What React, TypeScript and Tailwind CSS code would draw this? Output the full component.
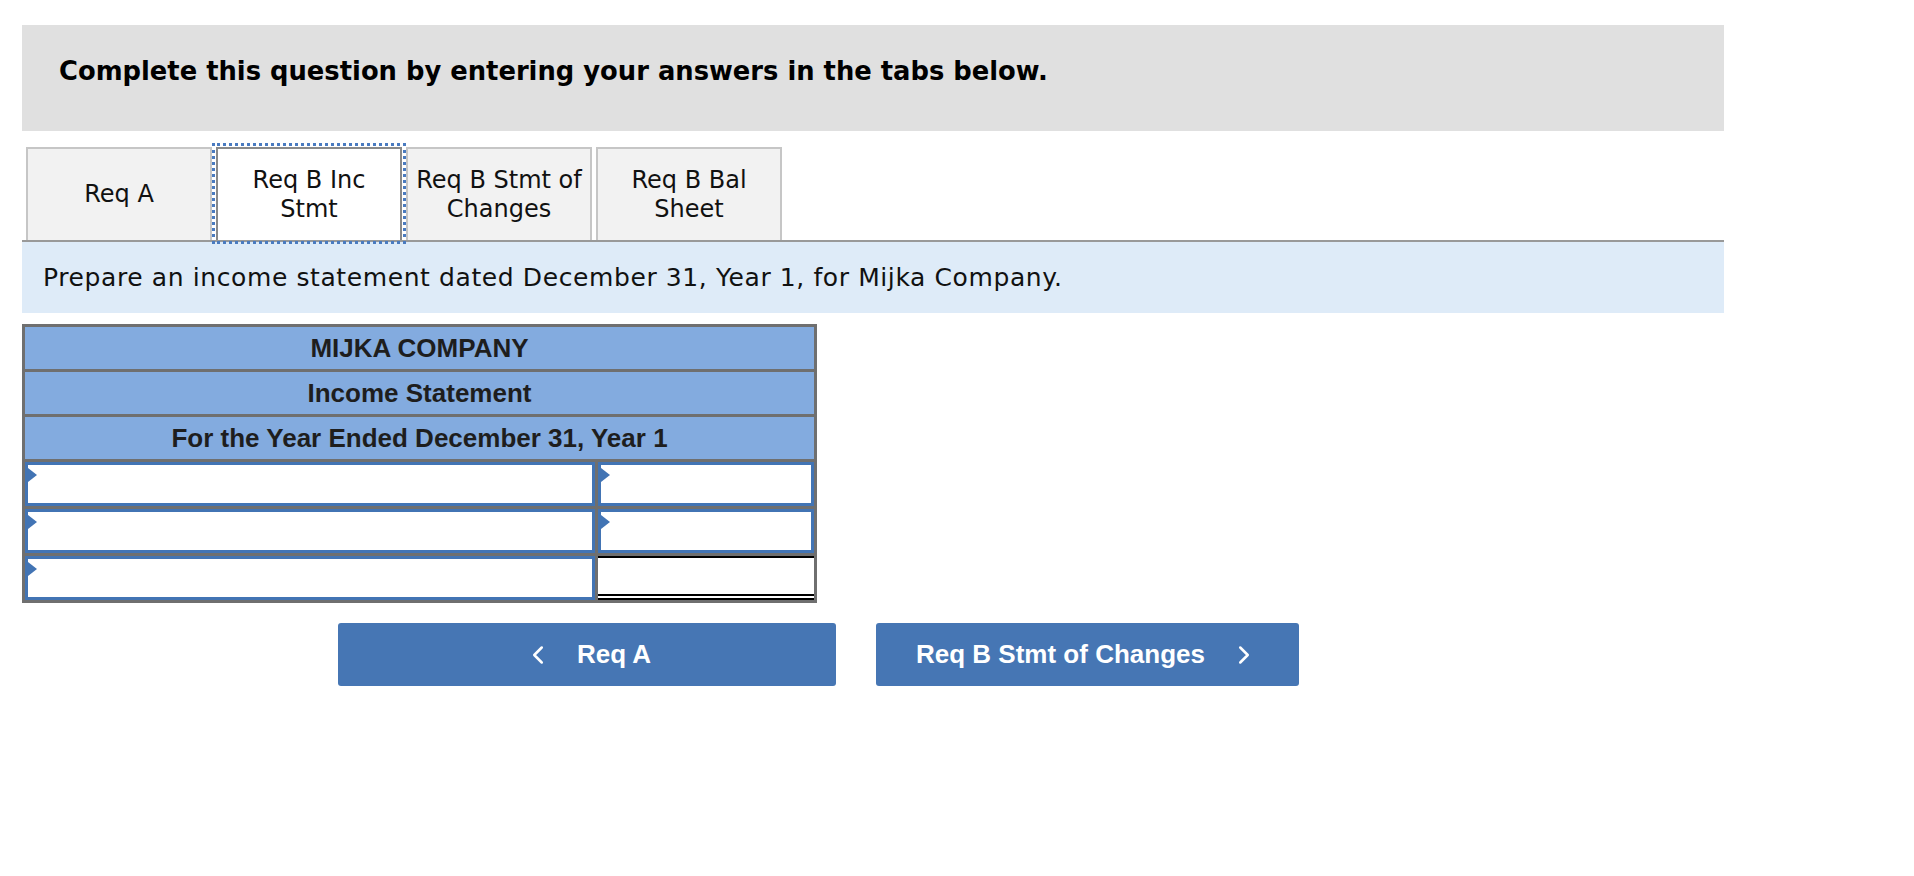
import { ChevronLeft, ChevronRight } from 'lucide-react';

const tabs = [
  { lines: ['Req A'], active: false },
  { lines: ['Req B Inc', 'Stmt'], active: true },
  { lines: ['Req B Stmt of', 'Changes'], active: false },
  { lines: ['Req B Bal', 'Sheet'], active: false },
];

const verdana = { fontFamily: '"DejaVu Sans", Verdana, sans-serif' };

function Marker() {
  return (
    <span className="absolute left-0 top-[3px] h-0 w-0 border-y-[7px] border-l-[9px] border-y-transparent border-l-[#4274b4]" />
  );
}

function InputBox() {
  return (
    <div className="relative h-full border-[3px] border-[#4274b4] bg-white">
      <Marker />
    </div>
  );
}

export default function App() {
  return (
    <div className="min-h-screen bg-white px-[22px] pt-[25px]">
      <div className="w-[1702px]">
        <div className="h-[106px] bg-[#e0e0e0] pl-[37px] pt-[31px]">
          <h1 className="text-[25.8px] font-bold leading-[30px] text-black" style={verdana}>
            Complete this question by entering your answers in the tabs below.
          </h1>
        </div>

        <div className="mt-[16px] flex h-[95px] gap-[4px] border-b-2 border-[#999999] pl-[4px]" style={verdana}>
          {tabs.map((t) => (
            <div
              key={t.lines.join(' ')}
              className={
                t.active
                  ? 'flex w-[186px] flex-col items-center justify-center border-2 border-b-0 border-[#8a8a8a] bg-white text-[24px] leading-[29px] text-[#111] outline-[3px] outline-offset-[1px] outline-[#4a7bc0] outline-dotted'
                  : 'flex w-[186px] flex-col items-center justify-center border-2 border-b-0 border-[#c6c6c6] bg-[#f2f2f2] text-[24px] leading-[29px] text-[#111]'
              }
            >
              {t.lines.map((l) => (
                <span key={l}>{l}</span>
              ))}
            </div>
          ))}
        </div>

        <div className="flex h-[71px] items-center bg-[#deebf8] pl-[21px]">
          <p className="text-[25px] tracking-[0.6px] text-[#111]" style={verdana}>
            Prepare an income statement dated December 31, Year 1, for Mijka Company.
          </p>
        </div>

        <div
          className="mt-[11px] w-[795px] border-[3px] border-[#6f6f6f] bg-[#6f6f6f]"
          style={{ fontFamily: '"Liberation Sans", Arial, sans-serif' }}
        >
          {['MIJKA COMPANY', 'Income Statement', 'For the Year Ended December 31, Year 1'].map((h) => (
            <div
              key={h}
              className="mb-[3px] flex h-[42px] items-center justify-center bg-[#83abdf] text-[26px] font-bold text-[#1e1e1e]"
            >
              {h}
            </div>
          ))}
          <div className="mb-[3px] grid h-[44px] grid-cols-[570px_1fr] gap-[3px]">
            <InputBox />
            <InputBox />
          </div>
          <div className="mb-[3px] grid h-[44px] grid-cols-[570px_1fr] gap-[3px]">
            <InputBox />
            <InputBox />
          </div>
          <div className="grid h-[44px] grid-cols-[570px_1fr] gap-[3px]">
            <InputBox />
            <div className="h-full border-t-2 border-b-[6px] border-t-black border-b-black border-double bg-white" />
          </div>
        </div>

        <div
          className="ml-[316px] mt-[20px] flex gap-[40px]"
          style={{ fontFamily: '"Liberation Sans", Arial, sans-serif' }}
        >
          <button className="flex h-[63px] w-[498px] items-center justify-center gap-[24px] rounded-[3px] bg-[#4676b4] text-[26px] font-bold text-white">
            <ChevronLeft size={30} strokeWidth={2} />
            <span>Req A</span>
          </button>
          <button className="flex h-[63px] w-[423px] items-center justify-center gap-[24px] rounded-[3px] bg-[#4676b4] text-[26px] font-bold text-white">
            <span>Req B Stmt of Changes</span>
            <ChevronRight size={30} strokeWidth={2} />
          </button>
        </div>
      </div>
    </div>
  );
}
